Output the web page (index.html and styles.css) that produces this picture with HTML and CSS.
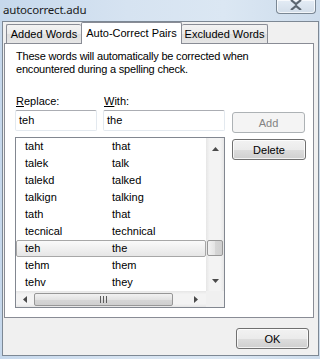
FILE: index.html
```
<!DOCTYPE html>
<html lang="en">

<head>
    <meta charset="UTF-8">
    <title>autocorrect.adu</title>
    <link rel="stylesheet" href="styles.css">
</head>

<body>
    <div class="window">
        <div class="titlebar">
            <span class="title">autocorrect.adu</span>
            <div class="close">
                <svg width="14" height="10" viewBox="0 0 14 10"><path d="M2 0 L7 4 L12 0 M2 10 L7 6 L12 10" fill="none" stroke="#5c6670" stroke-width="2.2"/></svg>
            </div>
        </div>
        <div class="client">
            <div class="tabs">
                <div class="tab first">Added Words</div>
                <div class="tab active">Auto-Correct Pairs</div>
                <div class="tab last">Excluded Words</div>
            </div>
            <div class="panel">
                <p class="intro">These words will automatically be corrected when<br>encountered during a spelling check.</p>
                <div class="editor">
                    <label class="lbl"><u>R</u>eplace:</label>
                    <label class="lbl"><u>W</u>ith:</label>
                    <span></span>

                    <div class="input">teh</div>
                    <div class="input">the</div>
                    <button class="btn add" disabled>Add</button>

                    <div class="list">
                        <div class="rows">
                            <div class="row"><span>taht</span><span>that</span></div>
                            <div class="row"><span>talek</span><span>talk</span></div>
                            <div class="row"><span>talekd</span><span>talked</span></div>
                            <div class="row"><span>talkign</span><span>talking</span></div>
                            <div class="row"><span>tath</span><span>that</span></div>
                            <div class="row"><span>tecnical</span><span>technical</span></div>
                            <div class="row selected"><span>teh</span><span>the</span></div>
                            <div class="row"><span>tehm</span><span>them</span></div>
                            <div class="row"><span>tehv</span><span>they</span></div>
                        </div>
                        <div class="vscroll">
                            <svg class="arrow" width="7" height="4" viewBox="0 0 7 4"><polygon points="0,4 7,4 3.5,0" fill="#4a4a4a"/></svg>
                            <div class="vthumb"></div>
                            <svg class="arrow" width="7" height="4" viewBox="0 0 7 4"><polygon points="0,0 7,0 3.5,4" fill="#4a4a4a"/></svg>
                        </div>
                        <div class="hscroll">
                            <svg class="arrow" width="4" height="7" viewBox="0 0 4 7"><polygon points="4,0 4,7 0,3.5" fill="#4a4a4a"/></svg>
                            <div class="hthumb"><span class="grip"></span></div>
                            <svg class="arrow" width="4" height="7" viewBox="0 0 4 7"><polygon points="0,0 0,7 4,3.5" fill="#4a4a4a"/></svg>
                        </div>
                        <div class="corner"></div>
                    </div>
                    <div class="side">
                        <button class="btn">Delete</button>
                    </div>
                </div>
            </div>
            <div class="footer">
                <button class="btn ok">OK</button>
            </div>
        </div>
    </div>
</body>

</html>
```

FILE: styles.css
```
* {
    box-sizing: border-box;
}

body {
    margin: 0;
    font-family: "Liberation Sans", Arial, sans-serif;
    font-size: 11px;
    color: #000;
}

.window {
    width: 320px;
    height: 359px;
    background: linear-gradient(90deg, #c6d8ec 0%, #d6e3f1 40%, #dbe7f3 70%, #cddcec 100%);
    display: flex;
    flex-direction: column;
    overflow: hidden;
}

.titlebar {
    height: 21px;
    display: flex;
    justify-content: space-between;
    align-items: flex-start;
    padding-left: 3px;
}

.title {
    font-family: "Noto Sans", "DejaVu Sans", sans-serif;
    font-size: 11.5px;
    letter-spacing: -0.2px;
    line-height: 17px;
    padding-top: 1px;
    color: #1a1a1a;
}

.close {
    width: 40px;
    height: 14px;
    margin-right: 4px;
    border: 1px solid #7a8794;
    border-top: none;
    border-radius: 0 0 4px 4px;
    background: linear-gradient(#e4ecf5, #d2dde9);
    box-shadow: inset 0 0 0 1px rgba(255, 255, 255, 0.7);
    display: flex;
    justify-content: center;
    align-items: flex-start;
}

.client {
    flex: 1;
    margin: 0 1px 3px 2px;
    border: 1px solid #7d8894;
    background: #f0f0f0;
    padding: 0 0 0 1px;
    display: flex;
    flex-direction: column;
}

.tabs {
    display: flex;
    height: 21px;
    padding-left: 2px;
    position: relative;
    z-index: 1;
}

.tab {
    height: 19px;
    margin-top: 2px;
    border: 1px solid #898c95;
    border-bottom: none;
    border-radius: 2px 2px 0 0;
    background: linear-gradient(#f3f3f3, #ebebeb 50%, #dedede 51%, #e6e6e6);
    text-align: center;
    line-height: 18px;
}

.tab.first {
    width: 75px;
    border-right: none;
}

.tab.last {
    width: 86px;
    border-left: none;
}

.tab.active {
    width: 101px;
    height: 22px;
    margin-top: 0;
    background: #fff;
    line-height: 20px;
    padding-bottom: 2px;
}

.panel {
    width: 310px;
    height: 275px;
    border: 1px solid #898c95;
    background: #fff;
    padding: 6px 0 0 11px;
}

.intro {
    margin: 0;
    line-height: 13px;
    letter-spacing: -0.2px;
}

.editor {
    margin: 19px 0 0 -1px;
    display: grid;
    grid-template-columns: 82px 122px 74px;
    grid-template-rows: 15px 21px 171px;
    column-gap: 6px;
}

.editor > :nth-child(3n) {
    margin-left: 1px;
}

.lbl {
    padding-left: 1px;
    line-height: 13px;
}

.input {
    height: 21px;
    border: 1px solid #e3e9ef;
    border-top-color: #abadb3;
    border-radius: 2px;
    padding-left: 3px;
    line-height: 19px;
}

.btn {
    font-family: "Liberation Sans", Arial, sans-serif;
    font-size: 11px;
    color: #000;
    height: 21px;
    border: 1px solid #707070;
    border-radius: 3px;
    background: linear-gradient(#f2f2f2, #ebebeb 50%, #dddddd 51%, #cfcfcf);
    box-shadow: inset 0 0 0 1px rgba(255, 255, 255, 0.75);
    padding: 0;
}

.btn.add {
    margin-top: 2px;
    border-color: #adb2b5;
    background: #f4f4f4;
    color: #838383;
    box-shadow: none;
}

.list {
    grid-column: 1 / 3;
    margin-top: 6px;
    height: 171px;
    border: 1px solid #828790;
    display: grid;
    grid-template-columns: 1fr 18px;
    grid-template-rows: 1fr 16px;
    overflow: hidden;
}

.rows {
    overflow: hidden;
}

.row {
    display: grid;
    grid-template-columns: 87px 1fr;
    height: 17px;
    line-height: 17px;
    padding-left: 8px;
    border: 1px solid transparent;
}

.row span {
    line-height: 15px;
}

.row.selected {
    border-color: #a7a7a7;
    border-radius: 2px;
    background: linear-gradient(#fafafa, #e6e6e6);
}

.vscroll {
    background: linear-gradient(90deg, #e6e6e6, #f3f3f3 20%, #f3f3f3 80%, #e6e6e6);
    display: flex;
    flex-direction: column;
    align-items: center;
    padding: 9px 0 8px;
}

.vthumb {
    width: 16px;
    height: 16px;
    margin-top: 89px;
    margin-bottom: auto;
    border: 1px solid #979797;
    border-radius: 2px;
    background: linear-gradient(90deg, #f2f2f2, #e3e3e3 50%, #d6d6d6 51%, #cfcfcf);
}

.hscroll {
    background: linear-gradient(#e6e6e6, #f3f3f3 20%, #f3f3f3 80%, #e6e6e6);
    display: flex;
    align-items: center;
    padding: 0 8px 0 7px;
}

.hthumb {
    width: 139px;
    height: 13px;
    margin-left: 7px;
    margin-right: auto;
    border: 1px solid #979797;
    border-radius: 2px;
    background: linear-gradient(#f2f2f2, #e3e3e3 50%, #d6d6d6 51%, #cfcfcf);
    display: flex;
    justify-content: center;
    align-items: center;
}

.grip {
    width: 7px;
    height: 7px;
    background: repeating-linear-gradient(90deg, #5c5c5c 0 1px, transparent 1px 3px);
}

.corner {
    background: #f0f0f0;
}

.side {
    margin-top: 8px;
    margin-left: 1px;
}

.side .btn {
    width: 74px;
}

.footer {
    flex: 1;
    display: flex;
    justify-content: flex-end;
    align-items: flex-start;
    padding: 10px 9px 0 0;
}

.btn.ok {
    width: 73px;
    height: 21px;
}
```
